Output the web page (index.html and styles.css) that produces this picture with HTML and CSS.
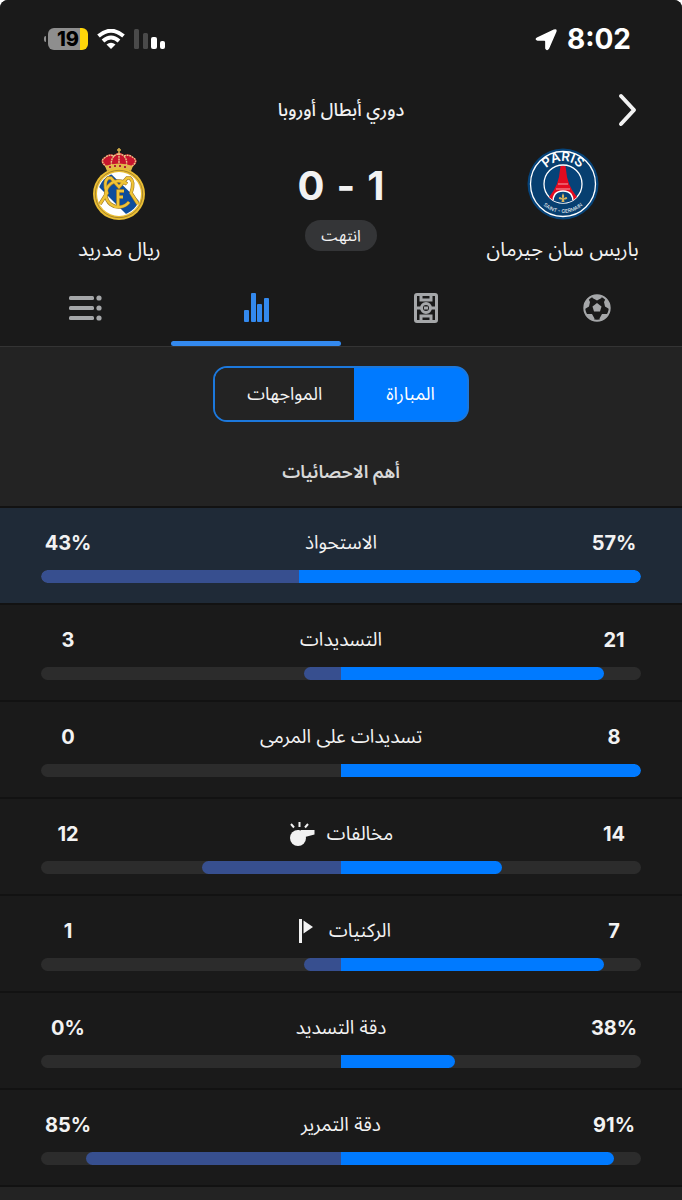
FILE: index.html
```html
<!DOCTYPE html>
<html lang="ar" dir="rtl">
<head>
    <meta charset="UTF-8">
    <meta name="viewport" content="width=device-width, initial-scale=1.0">
    <title>باريس سان جيرمان - ريال مدريد</title>
    <link rel="stylesheet" href="styles.css">
</head>
<body>
    <div class="app">
        <div class="status-bar">
            <div class="status-group">
                <span class="clock">8:02</span>
                <svg class="location-icon" viewBox="0 0 24 24">
                    <path d="M2 10 19.5 1.6Q23.4.4 22.4 4L14.8 21.5Q12.4 25 10.6 21.5V14.2Q10.6 13.4 9.8 13.4H2.6Q-1 12 2 10Z" />
                </svg>
            </div>
            <div class="status-group">
                <svg class="signal-icon" viewBox="0 0 32 20">
                    <rect class="dim" x="0" y="0" width="5" height="20" rx="1.5" />
                    <rect class="dim" x="9" y="4" width="5" height="16" rx="1.5" />
                    <rect x="17" y="8" width="6" height="12" rx="2" />
                    <rect x="26" y="12" width="5" height="8" rx="2" />
                </svg>
                <svg class="wifi-icon" viewBox="0 0 28 20">
                    <path d="M1.5 7Q14-3.500 26.5 7" />
                    <path d="M6 12Q14 5 22 12" />
                    <path class="dot" d="M9.500 15.500Q14 12 18.500 15.500L14 20Z" />
                </svg>
                <div class="battery"><span>19</span></div>
            </div>
        </div>

        <header class="league">
            <h1>دوري أبطال أوروبا</h1>
            <button type="button" class="back" aria-label="رجوع">
                <svg viewBox="0 0 20 34"><path d="M3 3 16 17 3 31" /></svg>
            </button>
        </header>

        <section class="match">
            <div class="team">
                <svg class="crest" viewBox="0 0 72 72">
                    <defs>
                        <path id="arcTop" d="M13 36A23 23 0 0 1 59 36" />
                        <path id="arcBottom" d="M7 36A29 29 0 0 0 65 36" />
                        <clipPath id="innerCircle"><circle cx="36" cy="36" r="19" /></clipPath>
                    </defs>
                    <circle cx="36" cy="36" r="35.5" fill="#064379" />
                    <circle cx="36" cy="36" r="32.5" fill="#073f70" stroke="#fff" stroke-width="1.3" />
                    <circle cx="36" cy="36" r="19" stroke="#fff" stroke-width="1.3" fill="#064379" />
                    <g clip-path="url(#innerCircle)">
                        <path d="M33.5 18H38.5L40 29Q43 43 54 53L46 58Q45 43 36 43T26 58L18 53Q29 43 32 29Z" fill="#e30b20" />
                        <path d="M31 36H41M29 41H43" stroke="#f4a5aa" stroke-width="1" />
                        <path d="M26 56Q25 43 36 43T46 56" fill="#064379" stroke="#fff" stroke-width="1.5" />
                    </g>
                    <path d="M36 45Q38 48 36.6 50.5Q39 48 40 49.5T38 51.500H37L37.500 54H34.500L35 51.500H34Q31 51 32 49.500T35.400 50.500Q34 48 36 45Z" fill="#d9b45c" />
                    <text class="crest-name"><textPath href="#arcTop" startOffset="50%">PARIS</textPath></text>
                    <text class="crest-sub"><textPath href="#arcBottom" startOffset="50%">SAINT - GERMAIN</textPath></text>
                </svg>
                <h2>باريس سان جيرمان</h2>
            </div>
            <div class="result">
                <div class="score"><span>1</span><span>-</span><span>0</span></div>
                <span class="state">انتهت</span>
            </div>
            <div class="team">
                <svg class="crest" viewBox="0 0 72 72">
                    <defs><clipPath id="shield"><circle cx="36" cy="46" r="21" /></clipPath></defs>
                    <path d="M24 20Q14 13 22 9Q25 5 31 7Q36 2 41 7Q47 5 50 9Q58 13 48 20Z" fill="#c8142d" />
                    <path d="M24 19Q16 13 22 9.500Q26 6 31 8Q36 4 41 8Q46 6 50 9.500Q56 13 48 19M31 8Q27 13 29 18M41 8Q45 13 43 18M36 5V18" fill="none" stroke="#e8c987" stroke-width="1.4" stroke-dasharray="2 .7" />
                    <path d="M36 0V5M34 2H38" stroke="#d8b34b" stroke-width="1.5" />
                    <path d="M22 18Q36 13 50 18L48 23Q36 19 24 23Z" fill="#e1b749" />
                    <path d="M26 19h2m3-1h2m3 0h2m3 1h2" stroke="#b32035" stroke-width="2" />
                    <circle cx="36" cy="46" r="26" fill="#e9bd33" />
                    <circle cx="36" cy="46" r="23.7" fill="none" stroke="#96752b" stroke-width=".8" />
                    <circle cx="36" cy="46" r="22" fill="#fff" />
                    <path clip-path="url(#shield)" d="M14 37 26 24 60 57 47 70Z" fill="#0d4d9c" />
                    <g fill="none" stroke="#9b7527" stroke-width="3.6">
                        <path d="M44 36A13 13 0 1 0 46 54" />
                        <path d="M17 56 24 45Q20 34 25 30H28L36 39 44 30H47Q52 34 48 45L55 56" />
                        <path d="M35 59V43H41M35 49H40" />
                    </g>
                    <g fill="none" stroke="#f0c436" stroke-width="2.4">
                        <path d="M44 36A13 13 0 1 0 46 54" />
                        <path d="M17 56 24 45Q20 34 25 30H28L36 39 44 30H47Q52 34 48 45L55 56" />
                        <path d="M35 59V43H41M35 49H40" />
                    </g>
                </svg>
                <h2>ريال مدريد</h2>
            </div>
        </section>

        <nav class="tabs">
            <button type="button" class="tab" aria-label="المباراة">
                <svg viewBox="0 0 34 34">
                    <defs><clipPath id="ball"><circle cx="17" cy="17" r="13" /></clipPath></defs>
                    <circle cx="17" cy="17" r="12.7" fill="none" stroke="currentColor" stroke-width="2" />
                    <path d="M17 12 21.5 15.5 20 20.5H14L12.5 15.500Z" />
                    <g clip-path="url(#ball)">
                        <path d="M11 2H23L21.500 7 17 9.500 12.500 7ZM2 8 8 7 10 11 9 15.500 4 18.500 0 16ZM32 8 26 7 24 11 25 15.500 30 18.500 34 16ZM6 30 6.500 23 12 23 14.500 27.500 13 32ZM28 30 27.500 23 22 23 19.500 27.500 21 32Z" />
                    </g>
                </svg>
            </button>
            <button type="button" class="tab" aria-label="التشكيلة">
                <svg viewBox="0 0 34 34" class="outline">
                    <rect x="6.5" y="3.5" width="21" height="27" rx="1.5" />
                    <path d="M12 4V9H22V4M12 30V25H22V30M7 17H12M22 17H27" />
                    <circle cx="17" cy="17" r="4.5" />
                    <path d="M15 17H19" />
                </svg>
            </button>
            <button type="button" class="tab active" aria-label="الاحصائيات">
                <svg viewBox="0 0 34 34">
                    <rect x="5" y="19" width="5" height="12" rx="1" />
                    <rect x="12" y="2" width="5" height="29" rx="1" />
                    <rect x="18" y="13" width="5" height="18" rx="1" />
                    <rect x="25" y="7" width="5" height="24" rx="1" />
                </svg>
            </button>
            <button type="button" class="tab" aria-label="الأحداث">
                <svg viewBox="0 0 34 34">
                    <rect x="1" y="5" width="25" height="4" rx="1.5" />
                    <rect x="1" y="15" width="25" height="4" rx="1.5" />
                    <rect x="1" y="25" width="25" height="4" rx="1.5" />
                    <circle cx="31" cy="7" r="2.6" />
                    <circle cx="31" cy="17" r="2.6" />
                    <circle cx="31" cy="27" r="2.6" />
                </svg>
            </button>
        </nav>

        <section class="stats-head">
            <div class="segmented">
                <button type="button" class="selected">المباراة</button>
                <button type="button">المواجهات</button>
            </div>
            <h3>أهم الاحصائيات</h3>
        </section>

        <ul class="stats">
            <li class="stat highlight">
                <div class="stat-info">
                    <span class="value">57%</span>
                    <span class="label">الاستحواذ</span>
                    <span class="value">43%</span>
                </div>
                <div class="bar">
                    <div class="home" style="width: 57%"></div>
                    <div class="away" style="width: 43%"></div>
                </div>
            </li>
            <li class="stat">
                <div class="stat-info">
                    <span class="value">21</span>
                    <span class="label">التسديدات</span>
                    <span class="value">3</span>
                </div>
                <div class="bar">
                    <div class="half home-half"><div class="home" style="width: 87.5%"></div></div>
                    <div class="half"><div class="away" style="width: 12.5%"></div></div>
                </div>
            </li>
            <li class="stat">
                <div class="stat-info">
                    <span class="value">8</span>
                    <span class="label">تسديدات على المرمى</span>
                    <span class="value">0</span>
                </div>
                <div class="bar">
                    <div class="half home-half"><div class="home" style="width: 100%"></div></div>
                    <div class="half"><div class="away" style="width: 0%"></div></div>
                </div>
            </li>
            <li class="stat">
                <div class="stat-info">
                    <span class="value">14</span>
                    <span class="label">مخالفات
                        <svg viewBox="0 0 26 26">
                            <circle cx="9" cy="17" r="8" />
                            <path d="M8 9H10V11H12V9H25.500V13.500L16 16Z" />
                            <path class="line" d="M2 3 5 6.500M10.500 1V6M19 3 16 6.500" />
                        </svg>
                    </span>
                    <span class="value">12</span>
                </div>
                <div class="bar">
                    <div class="half home-half"><div class="home" style="width: 53.8%"></div></div>
                    <div class="half"><div class="away" style="width: 46.2%"></div></div>
                </div>
            </li>
            <li class="stat">
                <div class="stat-info">
                    <span class="value">7</span>
                    <span class="label">الركنيات
                        <svg viewBox="0 0 26 26">
                            <rect x="8" y="1" width="3" height="24" />
                            <path d="M12.500 2.500 22 9 12.500 15.500Z" />
                        </svg>
                    </span>
                    <span class="value">1</span>
                </div>
                <div class="bar">
                    <div class="half home-half"><div class="home" style="width: 87.5%"></div></div>
                    <div class="half"><div class="away" style="width: 12.5%"></div></div>
                </div>
            </li>
            <li class="stat">
                <div class="stat-info">
                    <span class="value">38%</span>
                    <span class="label">دقة التسديد</span>
                    <span class="value">0%</span>
                </div>
                <div class="bar">
                    <div class="half home-half"><div class="home" style="width: 38%"></div></div>
                    <div class="half"><div class="away" style="width: 0%"></div></div>
                </div>
            </li>
            <li class="stat">
                <div class="stat-info">
                    <span class="value">91%</span>
                    <span class="label">دقة التمرير</span>
                    <span class="value">85%</span>
                </div>
                <div class="bar">
                    <div class="half home-half"><div class="home" style="width: 91%"></div></div>
                    <div class="half"><div class="away" style="width: 85%"></div></div>
                </div>
            </li>
        </ul>
    </div>
</body>
</html>
```

FILE: styles.css
```css
* {
    margin: 0;
    padding: 0;
    box-sizing: border-box;
}
body {
    font-family: Inter, "Noto Sans Arabic", "Noto Sans", "DejaVu Sans", sans-serif;
    background-color: #fff;
    color: #f2f2f2;
}
button {
    font: inherit;
    color: inherit;
    background: none;
    border: none;
    cursor: pointer;
}
svg {
    display: block;
    fill: currentColor;
}
.app {
    min-height: 100vh;
    background: #232323;
    border-radius: 8px 8px 0 0;
    overflow: hidden;
}

/* status bar */
.status-bar {
    display: flex;
    justify-content: space-between;
    align-items: center;
    height: 78px;
    padding: 0 51px 0 44px;
    background: #1a1a1a;
    color: #fff;
}
.status-group {
    display: flex;
    align-items: center;
    gap: 9px;
}
.clock {
    font-size: 28px;
    font-weight: 700;
}
.location-icon {
    width: 23px;
    height: 23px;
}
.signal-icon {
    width: 32px;
    height: 20px;
}
.signal-icon .dim {
    fill: #4a4a4a;
}
.wifi-icon {
    width: 28px;
    height: 20px;
    fill: none;
    stroke: currentColor;
    stroke-width: 4;
}
.wifi-icon .dot {
    fill: currentColor;
    stroke: none;
}
.battery {
    display: flex;
    align-items: center;
    direction: ltr;
}
.battery::before {
    content: "";
    width: 2px;
    height: 6px;
    margin-right: 2px;
    border-radius: 2px 0 0 2px;
    background: #8e8e8e;
}
.battery span {
    width: 40px;
    border-radius: 6px;
    background: linear-gradient(to right, #8e8e8e 80%, #ffd60a 80%);
    color: #000;
    font-size: 20px;
    font-weight: 800;
    line-height: 22px;
    text-align: center;
}

/* match header */
.league {
    position: relative;
    display: flex;
    justify-content: center;
    align-items: center;
    height: 64px;
    background: #1a1a1a;
}
.league h1 {
    font-size: 18px;
    font-weight: 500;
}
.back {
    position: absolute;
    right: 44px;
}
.back svg {
    width: 20px;
    height: 34px;
    fill: none;
    stroke: currentColor;
    stroke-width: 4;
    stroke-linecap: round;
    stroke-linejoin: round;
}
.match {
    display: grid;
    grid-template-columns: 35% 30% 35%;
    padding: 6px 0 9px;
    background: #1a1a1a;
}
.team {
    display: flex;
    flex-direction: column;
    align-items: center;
    gap: 15px;
}
.team h2 {
    font-size: 20px;
    font-weight: 400;
    line-height: 28px;
    white-space: nowrap;
}
.crest {
    width: 72px;
    height: 72px;
}
.crest text {
    fill: #fff;
    text-anchor: middle;
    direction: ltr;
}
.crest-name {
    font-size: 13px;
    font-weight: 600;
}
.crest-sub {
    font-size: 5px;
}
.result {
    display: flex;
    flex-direction: column;
    align-items: center;
    gap: 14px;
    padding-top: 18px;
}
.score {
    display: flex;
    gap: 12px;
    font-size: 40px;
    font-weight: 700;
    line-height: 40px;
}
.state {
    padding: 0 16px;
    border-radius: 16px;
    background: #343537;
    font-size: 16px;
    line-height: 31px;
}

/* tabs */
.tabs {
    display: grid;
    grid-template-columns: repeat(4, 1fr);
    background: #1a1a1a;
    border-bottom: 1px solid #343434;
}
.tab {
    display: flex;
    flex-direction: column;
    align-items: center;
    gap: 16px;
    padding-top: 19px;
    color: #a5a7a9;
}
.tab svg {
    width: 34px;
    height: 34px;
}
.tab .outline {
    fill: none;
    stroke: currentColor;
    stroke-width: 3;
}
.tab::after {
    content: "";
    width: 100%;
    height: 5px;
    border-radius: 3px;
}
.tab.active {
    color: #3389ee;
}
.tab.active::after {
    background: #3389ee;
}

/* stats */
.stats-head {
    display: flex;
    flex-direction: column;
    align-items: center;
    gap: 36px;
    padding: 19px 0 20px;
}
.stats-head h3 {
    color: #d8d8d8;
    font-size: 18px;
    font-weight: 600;
    line-height: 28px;
}
.segmented {
    display: flex;
    height: 56px;
    border: 2px solid #1c78dc;
    border-radius: 14px;
    background: linear-gradient(to right, #232323 50%, #007aff 60%);
    overflow: hidden;
}
.segmented button {
    padding: 0 32px;
    background: #232323;
    font-size: 18px;
}
.segmented .selected {
    background: #007aff;
    color: #fff;
}
.stats {
    list-style: none;
    border-bottom: 2px solid #121212;
}
.stat {
    padding: 21px 41px 20px;
    border-top: 2px solid #121212;
    background: #1a1a1a;
}
.stat.highlight {
    background: #1f2a37;
}
.stat-info {
    display: flex;
    justify-content: space-between;
    align-items: center;
    height: 28px;
    margin-bottom: 13px;
}
.value {
    width: 54px;
    font-size: 20px;
    font-weight: 700;
    text-align: center;
}
.label {
    display: flex;
    align-items: center;
    gap: 12px;
    font-size: 19px;
}
.label svg {
    width: 26px;
    height: 26px;
}
.label .line {
    fill: none;
    stroke: currentColor;
    stroke-width: 2;
}
.bar {
    display: flex;
    height: 13px;
    border-radius: 7px;
    background: #2c2c2c;
    overflow: hidden;
}
.half {
    display: flex;
    width: 50%;
}
.home-half {
    justify-content: flex-end;
}
.home {
    background: #007aff;
    border-radius: 0 7px 7px 0;
}
.away {
    background: #374f8f;
    border-radius: 7px 0 0 7px;
}
```
